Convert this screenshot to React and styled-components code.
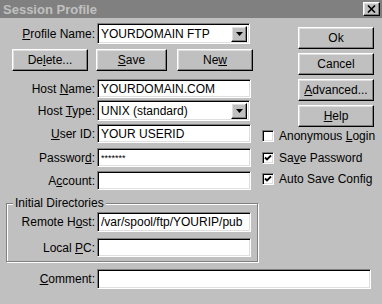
import React from "react";
import styled, { createGlobalStyle, css } from "styled-components";

const GlobalStyle = createGlobalStyle`
  html, body {
    margin: 0;
    padding: 0;
    background: #c0c0c0;
  }
  body {
    font-family: "Liberation Sans Narrow", "Liberation Sans", Arial, sans-serif;
  }
`;

const raised = css`
  box-sizing: border-box;
  background: #c0c0c0;
  border: 1px solid;
  border-color: #ffffff #000000 #000000 #ffffff;
  box-shadow: inset -1px -1px 0 #808080, inset 1px 1px 0 #dfdfdf;
`;

const sunken = css`
  box-sizing: border-box;
  background: #ffffff;
  border: 1px solid;
  border-color: #808080 #ffffff #ffffff #808080;
  box-shadow: inset 1px 1px 0 #000000, inset -1px -1px 0 #dfdfdf;
`;

const Window = styled.div`
  width: 382px;
  height: 304px;
  background: #c0c0c0;
  overflow: hidden;
  font-size: 12px;
  color: #000;
  display: flex;
  flex-direction: column;
`;

const TitleBar = styled.div`
  height: 18px;
  flex-shrink: 0;
  box-sizing: border-box;
  padding: 0 2px 0 3px;
  background: #808080;
  display: flex;
  align-items: center;
  justify-content: space-between;
`;

const Title = styled.span`
  font-weight: bold;
  font-size: 13px;
  color: #c0c0c0;
`;

const CloseButton = styled.div`
  ${raised};
  width: 17px;
  height: 14px;
  display: flex;
  align-items: center;
  justify-content: center;
`;

const Body = styled.div`
  padding: 5px 8px 0 0;
  display: flex;
  flex-direction: column;
`;

const TopSection = styled.div`
  display: flex;
  align-items: flex-start;
`;

const LeftForm = styled.div`
  width: 253px;
  display: flex;
  flex-direction: column;
`;

const Row = styled.div`
  display: flex;
  align-items: center;
  margin-top: ${(p) => p.$gap || 0}px;
`;

const Label = styled.label`
  width: ${(p) => p.$width || 95}px;
  flex-shrink: 0;
  margin-right: 2px;
  text-align: right;
  white-space: nowrap;
`;

const Input = styled.input`
  ${sunken};
  width: ${(p) => p.$width || 154}px;
  height: ${(p) => p.$height || 19}px;
  margin: 0;
  padding: 0 3px;
  font: inherit;
  font-size: ${(p) => (p.$small ? "9px" : "12px")};
  color: #000;
  outline: none;
`;

const Combo = styled.div`
  ${sunken};
  width: 153px;
  height: 21px;
  display: flex;
  align-items: center;
  padding: 2px 2px 2px 3px;
`;

const ComboValue = styled.span`
  flex: 1;
  white-space: nowrap;
`;

const DropButton = styled.div`
  ${raised};
  width: 16px;
  height: 16px;
  display: flex;
  align-items: center;
  justify-content: center;
`;

const ButtonRow = styled.div`
  display: flex;
  padding-left: 12px;
  margin-top: 5px;
`;

const Button = styled.div`
  ${raised};
  width: ${(p) => p.$width || 76}px;
  height: 22px;
  margin-left: ${(p) => p.$gap || 0}px;
  display: flex;
  align-items: center;
  justify-content: center;
  white-space: nowrap;
`;

const RightPanel = styled.div`
  margin-left: 9px;
  width: 112px;
  display: flex;
  flex-direction: column;
  align-items: flex-start;
  padding-top: 4px;
`;

const SideButton = styled(Button)`
  align-self: flex-end;
  margin-bottom: 4px;
`;

const CheckRow = styled.div`
  display: flex;
  align-items: center;
  height: 12px;
  margin-top: ${(p) => p.$gap || 0}px;
`;

const CheckBox = styled.div`
  ${sunken};
  width: 12px;
  height: 12px;
  margin-right: 5px;
  display: flex;
  align-items: center;
  justify-content: center;
`;

const CheckLabel = styled.span`
  white-space: nowrap;
`;

const GroupBox = styled.fieldset`
  width: 252px;
  box-sizing: border-box;
  margin: 6px 0 0 6px;
  padding: 0 0 4px 0;
  border: 1px solid #808080;
  box-shadow: inset 1px 1px 0 #ffffff, 1px 1px 0 #ffffff;
`;

const Legend = styled.legend`
  margin-left: 6px;
  padding: 0 2px;
  background: #c0c0c0;
  line-height: 14px;
`;

const U = styled.u`
  text-decoration: underline;
  text-underline-offset: 1px;
`;

const Arrow = () => (
  <svg width="7" height="4" viewBox="0 0 7 4">
    <path d="M0 0 H7 L3.5 4 Z" fill="#000" />
  </svg>
);

const Check = () => (
  <svg width="8" height="8" viewBox="0 0 8 8">
    <path d="M1 3.5 L3 5.5 L7 1.5" stroke="#000" strokeWidth="1.8" fill="none" />
  </svg>
);

const CloseIcon = () => (
  <svg width="9" height="8" viewBox="0 0 9 8">
    <path d="M1 0.5 L8 7.5 M8 0.5 L1 7.5" stroke="#000" strokeWidth="1.6" />
  </svg>
);

const App = () => {
  return (
    <>
      <GlobalStyle />
      <Window>
        <TitleBar>
          <Title>Session Profile</Title>
          <CloseButton>
            <CloseIcon />
          </CloseButton>
        </TitleBar>
        <Body>
          <TopSection>
            <LeftForm>
              <Row>
                <Label>
                  <U>P</U>rofile Name:
                </Label>
                <Combo>
                  <ComboValue>YOURDOMAIN FTP</ComboValue>
                  <DropButton>
                    <Arrow />
                  </DropButton>
                </Combo>
              </Row>
              <ButtonRow>
                <Button>
                  De<U>l</U>ete...
                </Button>
                <Button $width={71} $gap={8}>
                  <U>S</U>ave
                </Button>
                <Button $gap={10}>
                  Ne<U>w</U>
                </Button>
              </ButtonRow>
              <Row $gap={8}>
                <Label>
                  Host <U>N</U>ame:
                </Label>
                <Input readOnly defaultValue="YOURDOMAIN.COM" />
              </Row>
              <Row $gap={2}>
                <Label>
                  Host <U>T</U>ype:
                </Label>
                <Combo>
                  <ComboValue>UNIX (standard)</ComboValue>
                  <DropButton>
                    <Arrow />
                  </DropButton>
                </Combo>
              </Row>
              <Row $gap={3}>
                <Label>
                  <U>U</U>ser ID:
                </Label>
                <Input readOnly defaultValue="YOUR USERID" />
              </Row>
              <Row $gap={5}>
                <Label>
                  Passwor<U>d</U>:
                </Label>
                <Input readOnly $small defaultValue="*******" />
              </Row>
              <Row $gap={4}>
                <Label>
                  A<U>c</U>count:
                </Label>
                <Input readOnly defaultValue="" />
              </Row>
            </LeftForm>
            <RightPanel>
              <SideButton>Ok</SideButton>
              <SideButton>Cancel</SideButton>
              <SideButton>
                <U>A</U>dvanced...
              </SideButton>
              <SideButton>
                <U>H</U>elp
              </SideButton>
              <CheckRow $gap={-1}>
                <CheckBox />
                <CheckLabel>
                  Anonymous <U>L</U>ogin
                </CheckLabel>
              </CheckRow>
              <CheckRow $gap={10}>
                <CheckBox>
                  <Check />
                </CheckBox>
                <CheckLabel>
                  Sa<U>v</U>e Password
                </CheckLabel>
              </CheckRow>
              <CheckRow $gap={9}>
                <CheckBox>
                  <Check />
                </CheckBox>
                <CheckLabel>Auto Save Config</CheckLabel>
              </CheckRow>
            </RightPanel>
          </TopSection>
          <GroupBox>
            <Legend>Initial Directories</Legend>
            <Row $gap={2}>
              <Label $width={88}>
                Remote H<U>o</U>st:
              </Label>
              <Input readOnly $height={20} defaultValue="/var/spool/ftp/YOURIP/pub" />
            </Row>
            <Row $gap={6}>
              <Label $width={88}>
                Local <U>P</U>C:
              </Label>
              <Input readOnly defaultValue="" />
            </Row>
          </GroupBox>
          <Row $gap={7}>
            <Label>
              <U>C</U>omment:
            </Label>
            <Input readOnly $width={274} $height={20} defaultValue="" />
          </Row>
        </Body>
      </Window>
    </>
  );
};

export default App;
